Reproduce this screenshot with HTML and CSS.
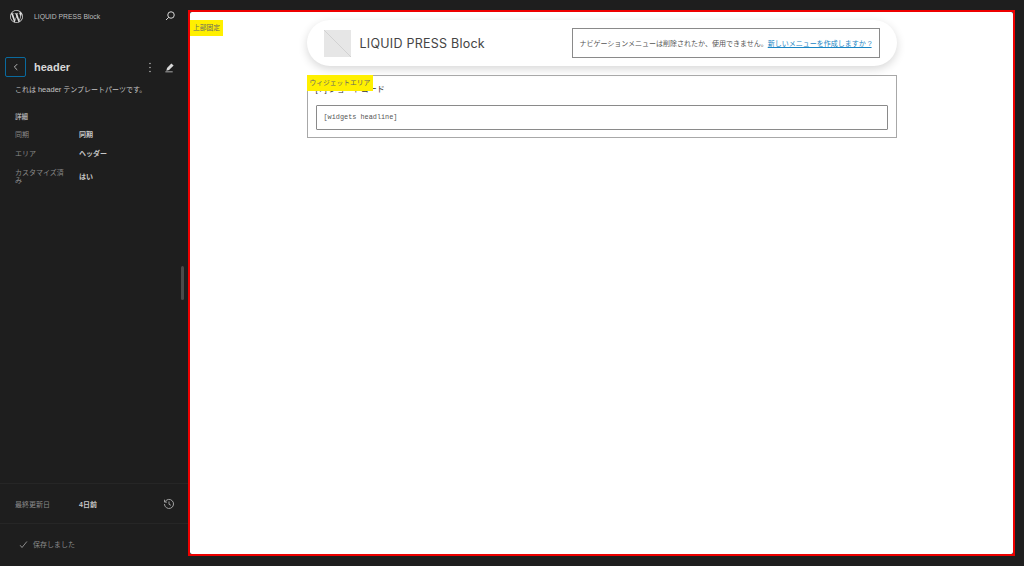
FILE: index.html
```html
<!DOCTYPE html>
<html lang="ja">
<head>
    <meta charset="UTF-8">
    <title>LIQUID PRESS Block</title>
    <link rel="stylesheet" href="styles.css">
</head>
<body>
    <div class="sidebar">
        <div class="topbar">
            <svg class="wp-logo" viewBox="0 0 20 20" width="13" height="13"><path fill="#e0e0e0" d="M10 0a10 10 0 1 0 0 20 10 10 0 0 0 0-20zM1.2 10c0-1.3.3-2.500.8-3.600l4.200 11.500A8.800 8.800 0 0 1 1.200 10zm8.800 8.800c-.9 0-1.700-.1-2.500-.4l2.600-7.700 2.700 7.500v.2c-.9.300-1.800.4-2.800.4zm1.200-12.900c.5 0 1-.1 1-.1.500-.1.400-.8-.1-.7 0 0-1.400.1-2.300.1-.9 0-2.300-.1-2.300-.1-.5 0-.5.700-.1.700 0 0 .5.100.9.100l1.400 3.700-1.900 5.800L4.600 5.900c.5 0 1-.1 1-.1.500-.1.400-.8-.1-.7 0 0-1.400.1-2.300.1h-.6A8.800 8.800 0 0 1 15.900 3.500h-.1c-.9 0-1.500.8-1.500 1.600 0 .7.400 1.300.9 2.100.3.600.7 1.300.7 2.400 0 .7-.3 1.600-.7 2.800l-.9 2.900zm3.200 11.700l2.700-7.800c.5-1.300.7-2.300.7-3.200 0-.3 0-.6-.1-.9A8.800 8.800 0 0 1 14.400 17.600z"/></svg>
            <span class="site-name">LIQUID PRESS Block</span>
            <svg class="search-icon" viewBox="0 0 24 24" width="12" height="12" fill="none" stroke="#d8d8d8" stroke-width="2"><circle cx="14" cy="10" r="6.500"/><path d="M9.500 14.500L4 20"/></svg>
        </div>

        <div class="title-row">
            <button class="back-btn">
                <svg viewBox="0 0 12 12" width="10" height="10" fill="none" stroke="#d0d0d0" stroke-width="1"><path d="M7.500 2.500L4 6l3.500 3.500"/></svg>
            </button>
            <h1 class="page-title">header</h1>
            <svg class="dots-icon" viewBox="0 0 4 14" width="4" height="11" fill="#b8b8b8"><circle cx="2" cy="2" r="1"/><circle cx="2" cy="7" r="1"/><circle cx="2" cy="12" r="1"/></svg>
            <svg class="pencil-icon" viewBox="0 0 12 12" width="11" height="11" fill="#d8d8d8"><path d="M8 1.500l2.500 2.300-5 5-3 .8.800-3zM1.500 10.300h8v.9h-8z"/></svg>
        </div>

        <p class="desc">これは <span class="desc-latin">header</span> テンプレートパーツです。</p>

        <h2 class="section-title">詳細</h2>
        <dl class="details">
            <dt>同期</dt>
            <dd>同期</dd>
            <dt>エリア</dt>
            <dd>ヘッダー</dd>
            <dt>カスタマイズ済み</dt>
            <dd>はい</dd>
        </dl>

        <div class="spacer"></div>

        <div class="modified">
            <span class="modified-label">最終更新日</span>
            <span class="modified-value">4日前</span>
            <svg class="history-icon" viewBox="0 0 14 14" width="12" height="12" fill="none" stroke="#a8a8a8" stroke-width="1.100"><path d="M2.300 4.500A5.300 5.300 0 1 1 1.700 7"/><path d="M1.800 2v2.800h2.800"/><path d="M7 4v3.300l2.200 1.200"/></svg>
        </div>

        <div class="saved">
            <svg viewBox="0 0 12 12" width="9" height="9" fill="none" stroke="#9a9a9a" stroke-width="1.200"><path d="M1.500 7l2.500 3L10.500 2"/></svg>
            <span>保存しました</span>
        </div>

        <div class="resize-handle"></div>
    </div>

    <div class="canvas">
        <div class="canvas-inner">
            <span class="tag tag-top">上部固定</span>
            <div class="content">
                <div class="pill">
                    <div class="logo-box">
                        <svg viewBox="0 0 27 27" width="27" height="27"><rect width="27" height="27" fill="#e6e6e6"/><path d="M0 0L27 27" stroke="#d2d2d2" stroke-width="1"/></svg>
                        <span class="logo-name">LIQUID PRESS Block</span>
                    </div>
                    <div class="nav-notice">ナビゲーションメニューは削除されたか、使用できません。<a href="#">新しいメニューを作成しますか ?</a></div>
                </div>
                <div class="widget-area">
                    <span class="tag tag-widget">ウィジェットエリア</span>
                    <div class="widget-title">[ / ] ショートコード</div>
                    <div class="widget-box">[widgets headline]</div>
                </div>
            </div>
        </div>
    </div>
</body>
</html>
```

FILE: styles.css
```css
* {
    box-sizing: border-box;
}
body {
    margin: 0;
    height: 566px;
    display: flex;
    overflow: hidden;
    background: #1e1e1e;
    font-family: "Liberation Sans", "Noto Sans CJK JP", sans-serif;
    color: #e0e0e0;
}
.sidebar {
    position: relative;
    width: 188px;
    height: 566px;
    display: flex;
    flex-direction: column;
}
.topbar {
    height: 32px;
    display: flex;
    align-items: center;
    padding-left: 10px;
}
.site-name {
    margin-left: 11px;
    font-size: 6.800px;
    color: #bdbdbd;
}
.search-icon {
    margin-left: auto;
    margin-right: 12px;
}
.title-row {
    margin-top: 25px;
    height: 20px;
    display: flex;
    align-items: center;
    padding-left: 5px;
}
.back-btn {
    width: 21px;
    height: 20px;
    padding: 0;
    display: flex;
    align-items: center;
    justify-content: center;
    background: none;
    border: 1px solid #0a6a9e;
    border-radius: 2px;
}
.page-title {
    margin: 0 0 0 8px;
    font-size: 11px;
    font-weight: bold;
    color: #d8d8d8;
}
.dots-icon {
    margin-left: auto;
}
.pencil-icon {
    margin-left: 12px;
    margin-right: 13px;
}
.desc {
    margin: 7px 0 0 15px;
    font-size: 7px;
    line-height: 12px;
    color: #c4c4c4;
}
.desc-latin {
    font-size: 7.500px;
}
.section-title {
    margin: 16px 0 0 15px;
    font-size: 6.500px;
    line-height: 10px;
    font-weight: bold;
    color: #a8a8a8;
}
.details {
    margin: 8px 0 0 15px;
    display: grid;
    grid-template-columns: 64px 1fr;
    row-gap: 9px;
    align-items: center;
    font-size: 7px;
    line-height: 8px;
}
.details dt {
    width: 50px;
    color: #8a8a8a;
    padding: 1px 0;
}
.details dd {
    margin: 0;
    font-weight: bold;
    color: #c8c8c8;
}
.spacer {
    flex: 1;
}
.modified {
    height: 41px;
    display: flex;
    align-items: center;
    padding: 0 13px 0 15px;
    border-top: 1px solid #262626;
    border-bottom: 1px solid #262626;
    font-size: 7px;
}
.modified-label {
    width: 64px;
    color: #8a8a8a;
}
.modified-value {
    font-weight: bold;
    color: #c8c8c8;
}
.history-icon {
    margin-left: auto;
}
.saved {
    height: 42px;
    display: flex;
    align-items: center;
    gap: 5px;
    padding: 0 0 2px 19px;
    font-size: 7px;
    color: #8a8a8a;
}
.resize-handle {
    position: absolute;
    left: 181px;
    top: 266px;
    width: 3px;
    height: 34px;
    border-radius: 2px;
    background: #4a4a4a;
}
.canvas {
    margin: 10px 0 10px 0;
    width: 827px;
    height: 546px;
    border: 2px solid #ee0000;
    background: #1e1e1e;
}
.canvas-inner {
    position: relative;
    height: 100%;
    background: #fff;
    border-radius: 2px;
}
.content {
    width: 590px;
    margin: 0 auto;
    padding-top: 8px;
}
.tag {
    position: absolute;
    background: #fff000;
    color: #666;
    font-size: 6.750px;
    line-height: 16px;
    padding: 0 3px;
}
.tag-top {
    left: 0;
    top: 8px;
}
.pill {
    height: 46px;
    display: flex;
    align-items: center;
    justify-content: space-between;
    padding: 0 17px;
    border-radius: 23px;
    background: #fff;
    box-shadow: 0 3px 10px rgba(0, 0, 0, 0.16);
}
.logo-box {
    display: flex;
    align-items: center;
    gap: 9px;
}
.logo-name {
    font-family: "Inter", "Liberation Sans", sans-serif;
    font-size: 12.500px;
    letter-spacing: 0.250px;
    color: #444;
}
.nav-notice {
    width: 308px;
    height: 30px;
    display: flex;
    align-items: center;
    justify-content: center;
    border: 1px solid #8a8a8a;
    font-size: 7px;
    color: #555;
    white-space: nowrap;
}
.nav-notice a {
    color: #1a85c4;
}
.widget-area {
    position: relative;
    margin-top: 9px;
    height: 63px;
    padding: 7px 8px;
    border: 1px solid #a8a8a8;
}
.tag-widget {
    left: -1px;
    top: -1px;
}
.widget-title {
    font-size: 8px;
    line-height: 14px;
    color: #333;
}
.widget-box {
    margin-top: 8px;
    height: 25px;
    padding: 0 0 2px 7px;
    display: flex;
    align-items: center;
    border: 1px solid #8a8a8a;
    border-radius: 1px;
    font-family: "Liberation Mono", monospace;
    font-size: 6.850px;
    color: #555;
}
```
